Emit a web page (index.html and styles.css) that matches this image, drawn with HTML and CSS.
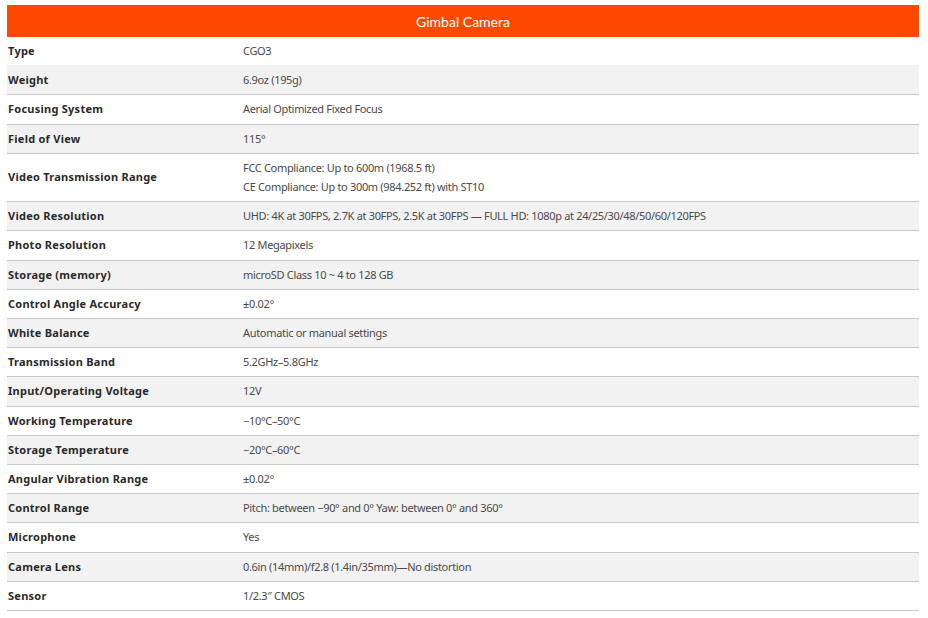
FILE: index.html
```html
<!DOCTYPE html>
<html>
<head>
<meta charset="utf-8">
<link rel="stylesheet" href="styles.css">
</head>
<body>
<table class="specs">
  <colgroup>
    <col class="col-label">
    <col class="col-value">
  </colgroup>
  <thead>
    <tr><th colspan="2" class="title">Gimbal Camera</th></tr>
  </thead>
  <tbody>
    <tr><td class="label">Type</td><td class="value">CGO3</td></tr>
    <tr><td class="label">Weight</td><td class="value">6.9oz (195g)</td></tr>
    <tr><td class="label">Focusing System</td><td class="value">Aerial Optimized Fixed Focus</td></tr>
    <tr><td class="label">Field of View</td><td class="value">115°</td></tr>
    <tr><td class="label">Video Transmission Range</td><td class="value">FCC Compliance: Up to 600m (1968.5 ft)<br>CE Compliance: Up to 300m (984.252 ft) with ST10</td></tr>
    <tr><td class="label">Video Resolution</td><td class="value">UHD: 4K at 30FPS, 2.7K at 30FPS, 2.5K at 30FPS — FULL HD: 1080p at 24/25/30/48/50/60/120FPS</td></tr>
    <tr><td class="label">Photo Resolution</td><td class="value">12 Megapixels</td></tr>
    <tr><td class="label">Storage (memory)</td><td class="value">microSD Class 10 ~ 4 to 128 GB</td></tr>
    <tr><td class="label">Control Angle Accuracy</td><td class="value">±0.02°</td></tr>
    <tr><td class="label">White Balance</td><td class="value">Automatic or manual settings</td></tr>
    <tr><td class="label">Transmission Band</td><td class="value">5.2GHz–5.8GHz</td></tr>
    <tr><td class="label">Input/Operating Voltage</td><td class="value">12V</td></tr>
    <tr><td class="label">Working Temperature</td><td class="value">−10°C–50°C</td></tr>
    <tr><td class="label">Storage Temperature</td><td class="value">−20°C–60°C</td></tr>
    <tr><td class="label">Angular Vibration Range</td><td class="value">±0.02°</td></tr>
    <tr><td class="label">Control Range</td><td class="value">Pitch: between −90° and 0° Yaw: between 0° and 360°</td></tr>
    <tr><td class="label">Microphone</td><td class="value">Yes</td></tr>
    <tr><td class="label">Camera Lens</td><td class="value">0.6in (14mm)/f2.8 (1.4in/35mm)—No distortion</td></tr>
    <tr><td class="label">Sensor</td><td class="value">1/2.3″ CMOS</td></tr>
  </tbody>
</table>
</body>
</html>
```
FILE: styles.css
```css
html, body {
  margin: 0;
  padding: 0;
  background: #ffffff;
}
body {
  padding: 5px 9px 0 7px;
  font-family: "Noto Sans", "Open Sans", sans-serif;
  font-size: 11px;
  color: #444444;
}
.specs {
  width: 912px;
  border-collapse: collapse;
  border-spacing: 0;
  table-layout: fixed;
}
.col-label {
  width: 235px;
}
.title {
  background: #ff4800;
  color: #ffffff;
  font-family: "Lato", "Noto Sans", sans-serif;
  font-weight: normal;
  font-size: 14px;
  height: 32px;
  padding: 0;
  text-align: center;
  vertical-align: middle;
}
.specs td {
  padding: 4px 0 5px 1px;
  line-height: 19.2px;
  border-bottom: 1px solid #c8c8c8;
  vertical-align: middle;
  text-align: left;
  white-space: nowrap;
}
.specs tbody tr:first-child td {
  border-bottom-color: #f2f2f2;
}
.specs tbody tr:nth-child(even) {
  background: #f2f2f2;
}
.label {
  font-weight: bold;
  color: #2a2a2a;
  letter-spacing: 0.25px;
}
.value {
  font-size: 11px;
  letter-spacing: -0.32px;
  color: #4a4a4a;
}
```
